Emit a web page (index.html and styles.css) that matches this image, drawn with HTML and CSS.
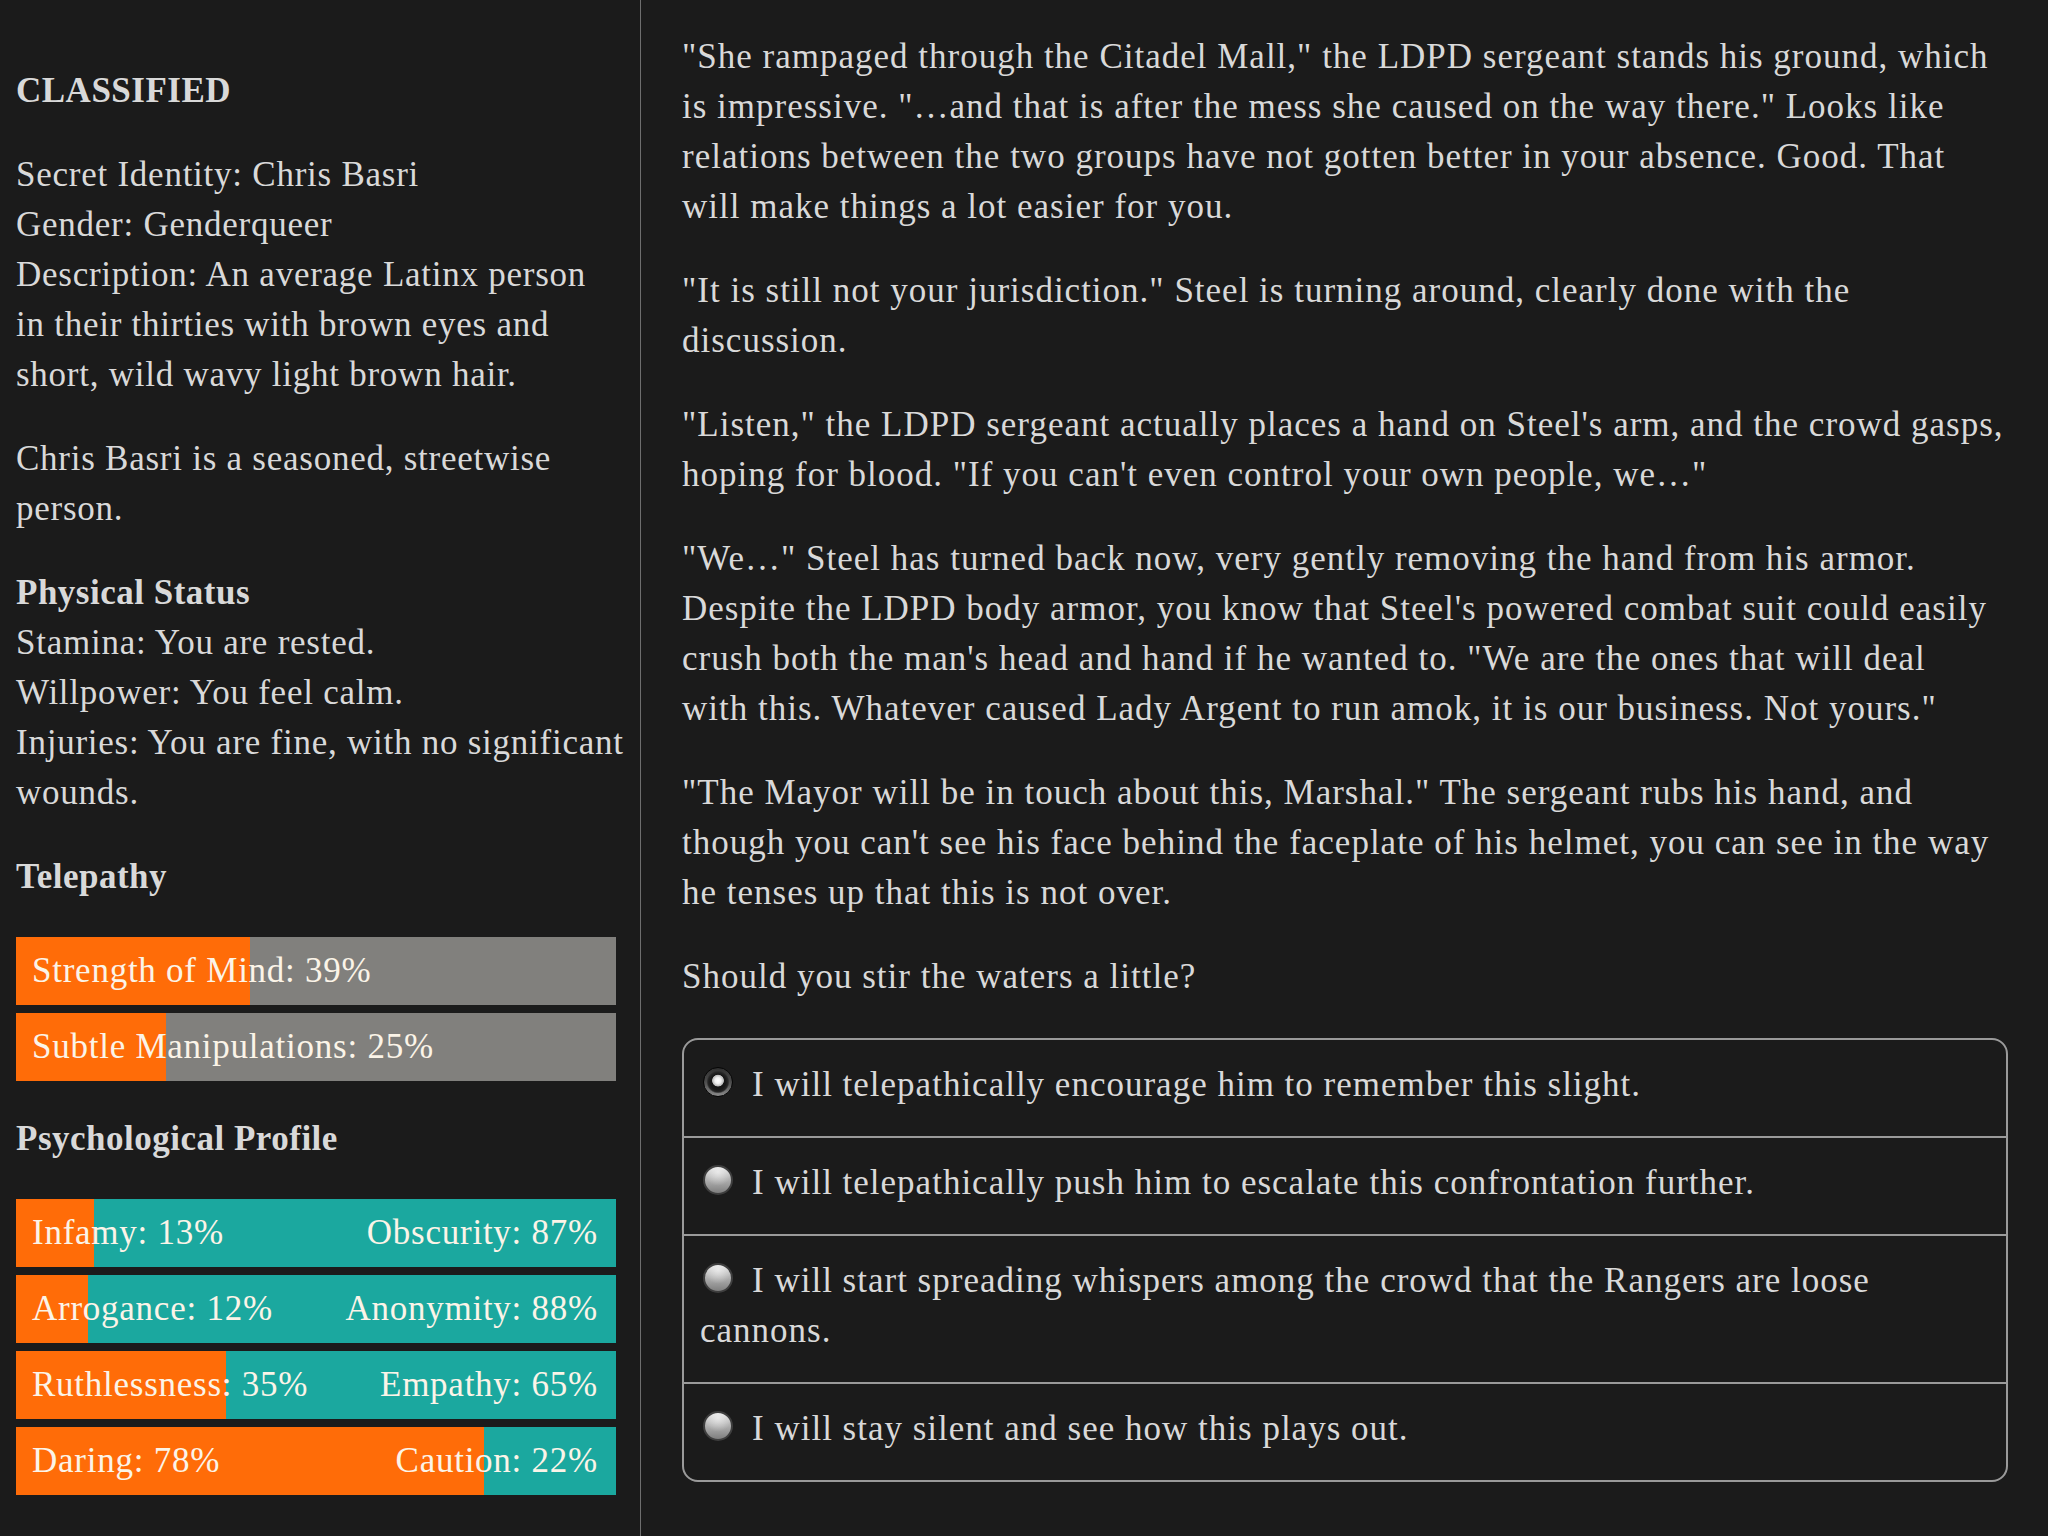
FILE: index.html
```html
<!DOCTYPE html>
<html lang="en">
<head>
<meta charset="utf-8">
<title>Classified</title>
<link rel="stylesheet" href="styles.css">
</head>
<body>
<div class="page">
  <aside class="sidebar">
    <h2 class="title">CLASSIFIED</h2>
    <p>Secret Identity: Chris Basri<br>Gender: Genderqueer<br>Description: An average Latinx person<br>in their thirties with brown eyes and short, wild wavy light brown hair.</p>
    <p>Chris Basri is a seasoned, streetwise person.</p>
    <h3 class="head">Physical Status</h3>
    <p>Stamina: You are rested.<br>Willpower: You feel calm.<br>Injuries: You are fine, with no significant wounds.</p>
    <h3 class="head">Telepathy</h3>
    <div class="bars">
      <div class="bar bar-single" style="--p:39%"><span>Strength of Mind: 39%</span></div>
      <div class="bar bar-single" style="--p:25%"><span>Subtle Manipulations: 25%</span></div>
    </div>
    <h3 class="head">Psychological Profile</h3>
    <div class="bars">
      <div class="bar bar-double" style="--p:13%"><span>Infamy: 13%</span><span>Obscurity: 87%</span></div>
      <div class="bar bar-double" style="--p:12%"><span>Arrogance: 12%</span><span>Anonymity: 88%</span></div>
      <div class="bar bar-double" style="--p:35%"><span>Ruthlessness: 35%</span><span>Empathy: 65%</span></div>
      <div class="bar bar-double" style="--p:78%"><span>Daring: 78%</span><span>Caution: 22%</span></div>
    </div>
  </aside>
  <main class="story">
    <p>"She rampaged through the Citadel Mall," the LDPD sergeant stands his ground, which is impressive. "…and that is after the mess she caused on the way there." Looks like relations between the two groups have not gotten better in your absence. Good. That will make things a lot easier for you.</p>
    <p>"It is still not your jurisdiction." Steel is turning around, clearly done with the discussion.</p>
    <p>"Listen," the LDPD sergeant actually places a hand on Steel's arm, and the crowd gasps, hoping for blood. "If you can't even control your own people, we…"</p>
    <p>"We…" Steel has turned back now, very gently removing the hand from his armor. Despite the LDPD body armor, you know that Steel's powered combat suit could easily crush both the man's head and hand if he wanted to. "We are the ones that will deal with&nbsp;this. Whatever caused Lady Argent to run amok, it is our business. Not yours."</p>
    <p>"The Mayor will be in touch about this, Marshal." The sergeant rubs his hand, and though you can't see his face behind the faceplate of his helmet, you can see in the way he tenses up that this is not over.</p>
    <p>Should you stir the waters a little?</p>
    <div class="choices">
      <div class="choice"><span class="radio selected"></span>I will telepathically encourage him to remember this slight.</div>
      <div class="choice"><span class="radio"></span>I will telepathically push him to escalate this confrontation further.</div>
      <div class="choice"><span class="radio"></span>I will start spreading whispers among the crowd that the Rangers are loose cannons.</div>
      <div class="choice"><span class="radio"></span>I will stay silent and see how this plays out.</div>
    </div>
  </main>
</div>
</body>
</html>
```
FILE: styles.css
```css
* { box-sizing: border-box; }
html, body {
  margin: 0;
  padding: 0;
  background: #1b1b1b;
}
body {
  font-family: "Liberation Serif", "Times New Roman", serif;
  font-size: 35px;
  line-height: 50px;
  letter-spacing: 1px;
  color: #d9d9d9;
}
.page {
  display: flex;
  min-height: 100vh;
}
.sidebar {
  width: 641px;
  flex: none;
  border-right: 1px solid #6e6e6e;
  padding: 66px 6px 40px 16px;
  letter-spacing: 0.75px;
}
.story {
  flex: 1;
  padding: 32px 40px 40px 41px;
}
p { margin: 0 0 34px; }
.title, .head {
  font-size: 35px;
  line-height: 50px;
  font-weight: bold;
  letter-spacing: 0.5px;
  margin: 0;
}
.title { margin-bottom: 34px; }
.bars {
  width: 600px;
  display: flex;
  flex-direction: column;
  gap: 8px;
  margin: 35px 0 33px;
}
.bar {
  height: 68px;
  padding: 9px 18px 9px 16px;
  color: #fbf4e8;
  display: flex;
  justify-content: space-between;
  white-space: nowrap;
}
.bar-single {
  background: linear-gradient(to right, #ff6c08 var(--p), #81807d var(--p));
}
.bar-double {
  background: linear-gradient(to right, #ff6c08 var(--p), #1ba89f var(--p));
}
.choices {
  margin-top: 36px;
  border: 2px solid #9a9a9a;
  border-radius: 16px;
}
.choice {
  padding: 20px 18px 26px 16px;
  border-top: 2px solid #9a9a9a;
}
.choice:first-child { border-top: none; }
.radio {
  display: inline-block;
  width: 30px;
  height: 30px;
  border-radius: 50%;
  margin: 0 19px 0 3px;
  vertical-align: -1px;
  border: 2px solid #3e3e3e;
  background:
    radial-gradient(circle at 50% 20%, rgba(255,255,255,0.55) 0, rgba(255,255,255,0) 55%),
    linear-gradient(#e0e0e0, #b4b4b4 45%, #7e7e7e);
}
.radio.selected {
  border: 1px solid #060606;
  background:
    radial-gradient(circle at 50% 45%, #ffffff 0, #f0f0f0 3px, #b8b8b8 5.5px, rgba(0,0,0,0) 6.2px),
    radial-gradient(circle at 50% 50%, #0c0c0c 0, #181818 8px, #262626 10px, rgba(0,0,0,0) 11.5px),
    linear-gradient(#303030, #4c4c4c 50%, #8a8a8a);
}
```
